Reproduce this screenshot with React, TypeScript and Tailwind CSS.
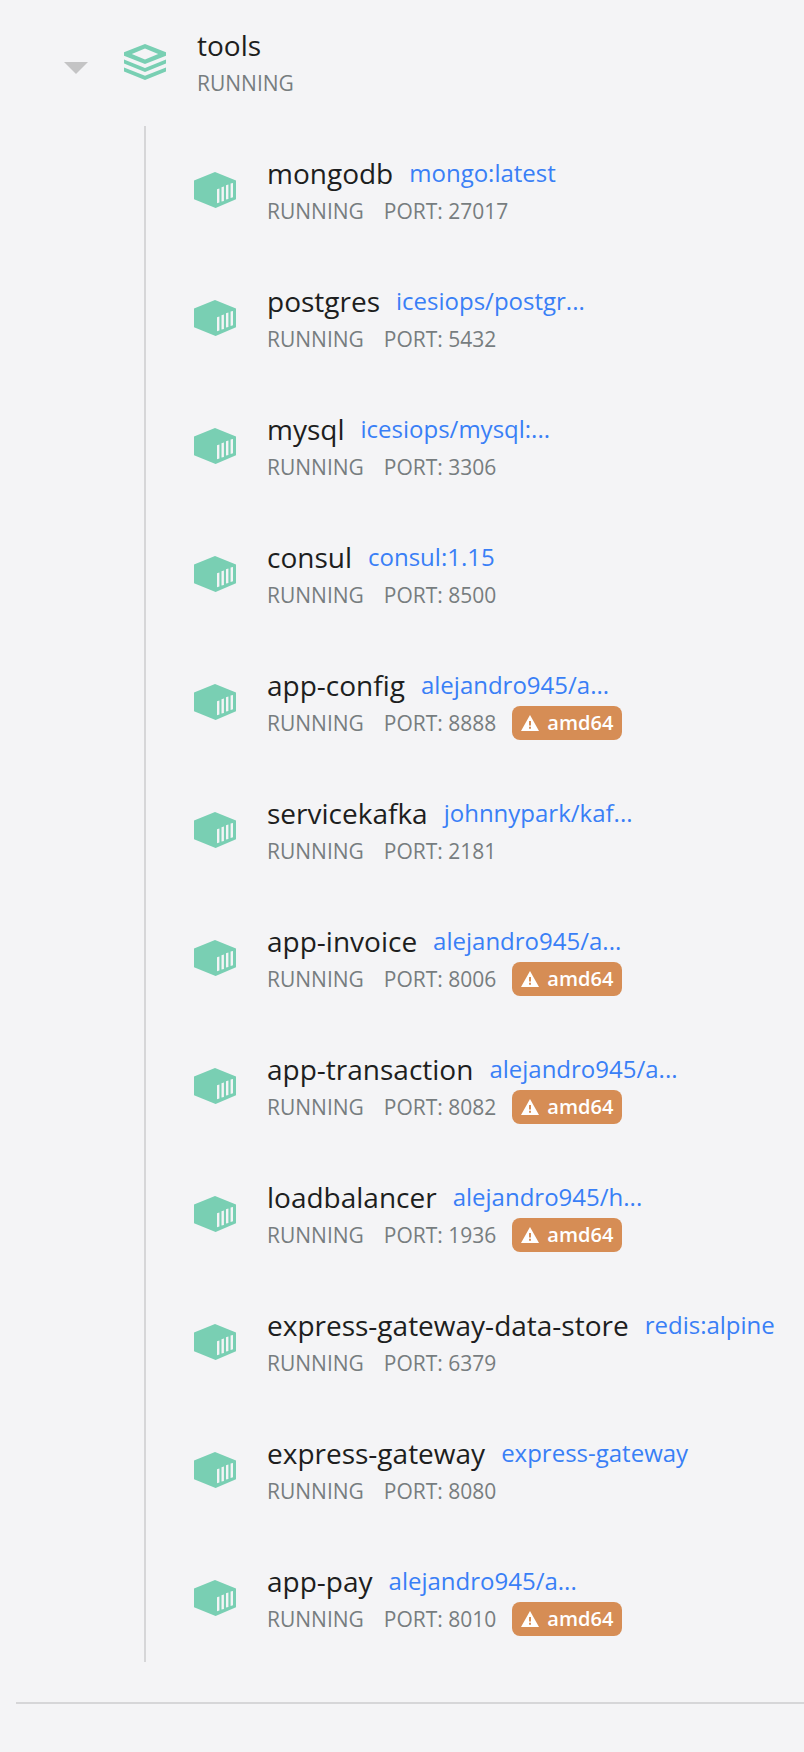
type Container = {
  name: string;
  image: string;
  port: number;
  arch?: string;
};

const containers: Container[] = [
  { name: "mongodb", image: "mongo:latest", port: 27017 },
  { name: "postgres", image: "icesiops/postgr...", port: 5432 },
  { name: "mysql", image: "icesiops/mysql:...", port: 3306 },
  { name: "consul", image: "consul:1.15", port: 8500 },
  { name: "app-config", image: "alejandro945/a...", port: 8888, arch: "amd64" },
  { name: "servicekafka", image: "johnnypark/kaf...", port: 2181 },
  { name: "app-invoice", image: "alejandro945/a...", port: 8006, arch: "amd64" },
  { name: "app-transaction", image: "alejandro945/a...", port: 8082, arch: "amd64" },
  { name: "loadbalancer", image: "alejandro945/h...", port: 1936, arch: "amd64" },
  { name: "express-gateway-data-store", image: "redis:alpine", port: 6379 },
  { name: "express-gateway", image: "express-gateway", port: 8080 },
  { name: "app-pay", image: "alejandro945/a...", port: 8010, arch: "amd64" },
];

function StackIcon() {
  return (
    <svg className="h-9 w-[42px] shrink-0" viewBox="0 0 42 36" fill="#79cfb3" aria-hidden="true">
      <path
        fillRule="evenodd"
        d="M21 0 42 8.3V11.7L21 20 0 11.7V8.3ZM21 4.4 7.8 10 21 15.6 34.2 10Z"
      />
      <path d="M0 15.6 21 23.9 42 15.6V19.6L21 28 0 19.6Z" />
      <path d="M0 23.4 21 31.7 42 23.4V27.6L21 36 0 27.6Z" />
    </svg>
  );
}

function ContainerIcon() {
  return (
    <svg className="h-9 w-[42px] shrink-0" viewBox="0 0 42 36" aria-hidden="true">
      <path fill="#79cfb3" d="M21 0 42 8.6V27.3L21.6 36 0 27.3V8.6Z" />
      <path
        fill="#f4f4f6"
        d="M23 17.3 25.4 16.6V30.6L23 31.3ZM27.5 15.2 29.9 14.5V28.9L27.5 29.6ZM32 13.2 34.4 12.5V26.9L32 27.6ZM36.6 11.6 39 10.9V25.3L36.6 26Z"
      />
    </svg>
  );
}

function WarningIcon() {
  return (
    <svg className="h-4 w-[18px] shrink-0" viewBox="0 0 18 16" aria-hidden="true">
      <path fill="#fff" d="M9 0 18 16H0Z" />
      <path fill="#d68d55" d="M8 6H10V10.4H8ZM8 11.8H10V13.8H8Z" />
    </svg>
  );
}

function ContainerRow({ name, image, port, arch }: Container) {
  return (
    <li className="flex h-32 items-start pl-12">
      <div className="flex h-32 items-center">
        <ContainerIcon />
      </div>
      <div className="flex min-w-0 flex-col gap-0.5 pt-7 pl-[31px]">
        <div className="flex h-[38px] items-center gap-4 whitespace-nowrap">
          <h2 className="text-[28px] leading-[38px] text-[#1d1e20]">{name}</h2>
          <a href="#" className="text-2xl leading-8 text-[#397ff6]">
            {image}
          </a>
        </div>
        <div className="flex h-[34px] items-center whitespace-nowrap text-[21px] leading-7 text-[#777d7f]">
          <span>RUNNING</span>
          <span className="ml-5">PORT: {port}</span>
          {arch && (
            <span className="ml-4 flex h-[34px] items-center gap-2 rounded-lg bg-[#d68d55] px-[9px] text-xl leading-7 font-semibold text-white">
              <WarningIcon />
              {arch}
            </span>
          )}
        </div>
      </div>
    </li>
  );
}

export default function App() {
  return (
    <main className="min-h-screen overflow-hidden bg-[#f4f4f6] pb-12 font-['Open_Sans',sans-serif]">
      <header className="flex h-[126px] items-start pl-16">
        <button type="button" aria-label="Collapse tools" className="mt-[62px]">
          <svg className="h-3 w-6" viewBox="0 0 24 12" aria-hidden="true">
            <path fill="#c4c4c5" d="M0 0H24L12 12Z" />
          </svg>
        </button>
        <div className="mt-11 ml-9">
          <StackIcon />
        </div>
        <div className="flex flex-col gap-0.5 pt-[26px] pl-[31px]">
          <h1 className="text-[28px] leading-[38px] text-[#1d1e20]">tools</h1>
          <p className="text-[21px] leading-[34px] text-[#777d7f]">RUNNING</p>
        </div>
      </header>
      <ul className="ml-36 border-l-2 border-[#d6d6d8]">
        {containers.map((container) => (
          <ContainerRow key={container.name} {...container} />
        ))}
      </ul>
      <hr className="mt-10 ml-4 border-t-2 border-[#d6d6d8]" />
    </main>
  );
}
